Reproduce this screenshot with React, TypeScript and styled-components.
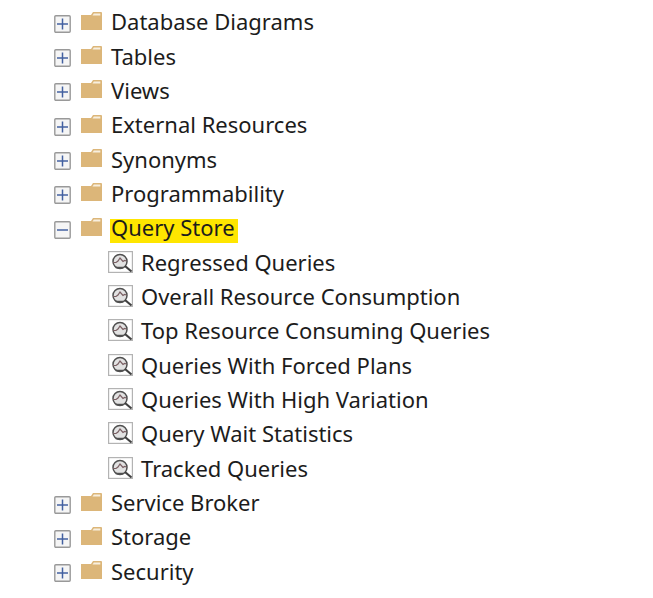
import React, { useState } from "react";
import styled, { createGlobalStyle } from "styled-components";

const GlobalStyle = createGlobalStyle`
  * { box-sizing: border-box; }
  body { margin: 0; background: #ffffff; }
`;

const Tree = styled.ul`
  display: grid;
  grid-auto-rows: minmax(32px, 1fr);
  min-height: 100vh;
  margin: 0;
  padding: 5px 16px 9px 54px;
  list-style: none;
  color: #1c1c1c;
  font-family: "Segoe UI", "Noto Sans", sans-serif;
  font-size: 22px;
  line-height: 24px;
`;

const Row = styled.li<{ $nested?: boolean }>`
  display: flex;
  align-items: center;
  padding-left: ${({ $nested }) => ($nested ? "54px" : "0")};
  white-space: nowrap;
`;

const Toggle = styled.button`
  display: flex;
  flex: none;
  width: 17px;
  height: 18px;
  margin: 3px 10px 0 0;
  padding: 0;
  border: 0;
  background: none;
`;

const FolderSvg = styled.svg`
  flex: none;
  margin: 0 8px 3px 0;
`;

const ReportSvg = styled.svg`
  flex: none;
  margin: 0 7px 2px 0;
`;

const Label = styled.span<{ $marked?: boolean }>`
  margin-bottom: ${({ $marked }) => ($marked ? "-2px" : "2px")};
  padding: ${({ $marked }) => ($marked ? "0 3px 4px 1px" : "0 3px 0 1px")};
  background: ${({ $marked }) =>
    $marked ? "linear-gradient(#ffe600, #ffe600) 0 4px no-repeat" : "none"};
`;

function ToggleIcon({ open }: { open: boolean }) {
  return (
    <svg width="17" height="18" viewBox="0 0 17 18" aria-hidden="true">
      <rect x="0.8" y="0.8" width="15.4" height="16.4" rx="1" fill="#f5f5f5" stroke="#999999" strokeWidth="1.4" />
      <path d="M3 9h11" stroke="#4360a0" strokeWidth="1.5" />
      {!open && <path d="M8.5 3.5v11" stroke="#4360a0" strokeWidth="1.5" />}
    </svg>
  );
}

function FolderIcon() {
  return (
    <FolderSvg width="21" height="18" viewBox="0 0 21 18" aria-hidden="true">
      <path d="M0 3h10l2-3h8.5L21 1v17H0z" fill="#dcb679" />
      <path d="M11.5 3.4 12.8 1.6h6.5v1.8z" fill="#f8efdf" />
    </FolderSvg>
  );
}

function ReportIcon() {
  return (
    <ReportSvg width="25" height="22" viewBox="0 0 25 22" aria-hidden="true">
      <rect x="0.6" y="0.6" width="23.8" height="20.8" fill="#ffffff" stroke="#b3b3b3" strokeWidth="1.2" />
      <circle cx="12" cy="10.500" r="7" fill="#e2e2e2" stroke="#505050" strokeWidth="1.5" />
      <path d="M5 11.500h3l2-1.500 2-3 3 3.500 1.500-1 2 .500" fill="none" stroke="#7a5f63" strokeWidth="1.200" />
      <path d="M7.500 16.500h7.500" stroke="#505050" strokeWidth="1.500" />
      <path d="m17 15 6.500 5.500" stroke="#404040" strokeWidth="2.200" />
    </ReportSvg>
  );
}

const before = ["Database Diagrams", "Tables", "Views", "External Resources", "Synonyms", "Programmability"];
const reports = [
  "Regressed Queries",
  "Overall Resource Consumption",
  "Top Resource Consuming Queries",
  "Queries With Forced Plans",
  "Queries With High Variation",
  "Query Wait Statistics",
  "Tracked Queries",
];
const after = ["Service Broker", "Storage", "Security"];

interface FolderProps {
  name: string;
  open?: boolean;
  marked?: boolean;
  onToggle?: () => void;
}

function Folder({ name, open = false, marked, onToggle }: FolderProps) {
  return (
    <Row role="treeitem" aria-level={1} aria-expanded={open}>
      <Toggle type="button" aria-label={`Toggle ${name}`} onClick={onToggle}>
        <ToggleIcon open={open} />
      </Toggle>
      <FolderIcon />
      <Label $marked={marked}>{name}</Label>
    </Row>
  );
}

export default function App() {
  const [open, setOpen] = useState(true);
  return (
    <>
      <GlobalStyle />
      <Tree role="tree" aria-label="Database objects">
        {before.map((name) => (
          <Folder key={name} name={name} />
        ))}
        <Folder name="Query Store" open={open} marked onToggle={() => setOpen(!open)} />
        {open &&
          reports.map((name) => (
            <Row key={name} role="treeitem" aria-level={2} $nested>
              <ReportIcon />
              <Label>{name}</Label>
            </Row>
          ))}
        {after.map((name) => (
          <Folder key={name} name={name} />
        ))}
      </Tree>
    </>
  );
}
